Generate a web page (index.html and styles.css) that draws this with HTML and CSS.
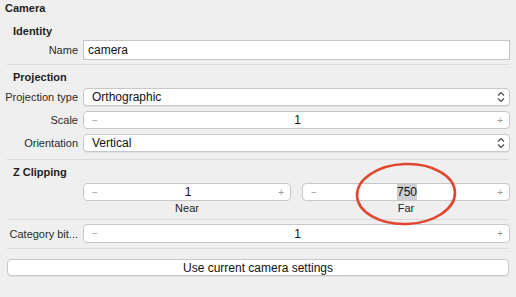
FILE: index.html
```html
<!DOCTYPE html>
<html lang="en">
<head>
    <meta charset="UTF-8">
    <title>Camera</title>
    <link rel="stylesheet" href="styles.css">
</head>
<body>
    <div class="panel">
        <h1 class="title">Camera</h1>

        <!-- Identity -->
        <h2 class="group">Identity</h2>
        <div class="row row-name">
            <label class="label">Name</label>
            <div class="text-field">camera</div>
        </div>

        <hr class="sep sep-1">

        <!-- Projection -->
        <h2 class="group">Projection</h2>
        <div class="row row-first">
            <label class="label">Projection type</label>
            <div class="select">
                <span>Orthographic</span>
                <svg class="chevrons" width="8" height="12" viewBox="0 0 8 12">
                    <path d="M1 4.5 L4 1.5 L7 4.5 M1 7.5 L4 10.5 L7 7.5" fill="none" stroke="#4a4a4a" stroke-width="1.2"/>
                </svg>
            </div>
        </div>
        <div class="row row-next">
            <label class="label">Scale</label>
            <div class="stepper">
                <span class="minus">−</span>
                <span class="value">1</span>
                <span class="plus">+</span>
            </div>
        </div>
        <div class="row row-next">
            <label class="label">Orientation</label>
            <div class="select">
                <span>Vertical</span>
                <svg class="chevrons" width="8" height="12" viewBox="0 0 8 12">
                    <path d="M1 4.5 L4 1.5 L7 4.5 M1 7.5 L4 10.5 L7 7.5" fill="none" stroke="#4a4a4a" stroke-width="1.2"/>
                </svg>
            </div>
        </div>

        <hr class="sep sep-2">

        <!-- Z Clipping -->
        <h2 class="group">Z Clipping</h2>
        <div class="row row-clip">
            <span class="label"></span>
            <div class="pair">
                <div class="pair-item">
                    <div class="stepper">
                        <span class="minus">−</span>
                        <span class="value">1</span>
                        <span class="plus">+</span>
                    </div>
                    <div class="caption">Near</div>
                </div>
                <div class="pair-item">
                    <div class="stepper">
                        <span class="minus">−</span>
                        <span class="value"><span class="selected">750</span></span>
                        <span class="plus">+</span>
                    </div>
                    <div class="caption">Far</div>
                </div>
            </div>
        </div>

        <hr class="sep sep-3">

        <div class="row row-cat">
            <label class="label">Category bit...</label>
            <div class="stepper">
                <span class="minus">−</span>
                <span class="value">1</span>
                <span class="plus">+</span>
            </div>
        </div>

        <hr class="sep sep-4">

        <button class="action">Use current camera settings</button>

        <hr class="sep sep-bottom">

        <!-- hand drawn annotation -->
        <svg class="circle-mark" width="110" height="72" viewBox="0 0 110 72">
            <ellipse cx="55" cy="36" rx="49" ry="30" fill="none" stroke="#e2462f" stroke-width="2.6" transform="rotate(-2 55 36)"/>
        </svg>
    </div>
</body>
</html>
```

FILE: styles.css
```css
* {
    margin: 0;
    padding: 0;
    box-sizing: border-box;
}

body {
    background: #efefef;
    font-family: "Liberation Sans", Arial, sans-serif;
    color: #222;
    width: 516px;
    height: 297px;
    overflow: hidden;
}

.panel {
    position: relative;
    padding: 0 6px 0 0;
}

.title {
    font-size: 11px;
    font-weight: bold;
    line-height: 16px;
    padding-left: 5px;
    color: #1e1e1e;
}

.group {
    font-size: 11px;
    font-weight: bold;
    line-height: 16px;
    padding-left: 13px;
    margin-top: 4px;
    color: #1e1e1e;
}

.title + .group {
    margin-top: 7px;
}

.row {
    display: flex;
    align-items: center;
}

.label {
    width: 78px;
    flex: none;
    text-align: right;
    font-size: 11px;
    color: #2a2a2a;
    margin-right: 5px;
    white-space: nowrap;
}

.row-name {
    margin-top: 1px;
}

.row-first {
    margin-top: 3px;
}

.row-next {
    margin-top: 5px;
}

.row-clip {
    margin-top: 3px;
    align-items: flex-start;
}

.row-cat {
    margin-top: 4px;
}

.text-field {
    flex: 1;
    height: 20px;
    background: #fff;
    border: 1px solid #c4c4c4;
    font-size: 12px;
    line-height: 18px;
    padding-left: 4px;
    color: #111;
}

.select {
    flex: 1;
    height: 18px;
    background: #fff;
    border: 1px solid #c8c8c8;
    border-radius: 4px;
    box-shadow: 0 1px 0 rgba(0, 0, 0, 0.06);
    display: flex;
    align-items: center;
    justify-content: space-between;
    font-size: 12px;
    color: #111;
    padding: 0 4px 0 8px;
}

.chevrons {
    display: block;
}

.stepper {
    flex: 1;
    height: 18px;
    background: #fff;
    border: 1px solid #c8c8c8;
    border-radius: 4px;
    display: flex;
    align-items: center;
    font-size: 12px;
    color: #111;
    padding: 0 6px 0 8px;
}

.row-cat .stepper {
    height: 19px;
}

.minus,
.plus {
    color: #9a9a9a;
    font-size: 10px;
    width: 8px;
}

.plus {
    text-align: right;
}

.value {
    flex: 1;
    text-align: center;
}

.selected {
    background: #cfcfcf;
    padding: 1px 0;
}

.pair {
    flex: 1;
    display: flex;
    gap: 11px;
}

.pair-item {
    flex: 1;
    display: flex;
    flex-direction: column;
}

.pair-item .stepper {
    flex: none;
}

.caption {
    text-align: center;
    font-size: 11px;
    line-height: 14px;
    color: #1e1e1e;
}

.sep {
    border: none;
    height: 1px;
    background: #dadada;
    margin-left: 7px;
    margin-right: 1px;
}

.sep-1 {
    margin-top: 4px;
}

.sep-2 {
    margin-top: 7px;
}

.sep-3 {
    margin-top: 4px;
}

.sep-4 {
    margin-top: 5px;
}

.action {
    display: block;
    width: 502px;
    height: 17px;
    margin: 10px 0 0 7px;
    background: #fff;
    border: 1px solid #c8c8c8;
    border-radius: 4px;
    box-shadow: 0 1px 0 rgba(0, 0, 0, 0.06);
    font-family: "Liberation Sans", Arial, sans-serif;
    font-size: 12px;
    color: #111;
}

.sep-bottom {
    margin: 21px 0 0 0;
    background: #dcdcdc;
}

.circle-mark {
    position: absolute;
    left: 351px;
    top: 158px;
}
```
